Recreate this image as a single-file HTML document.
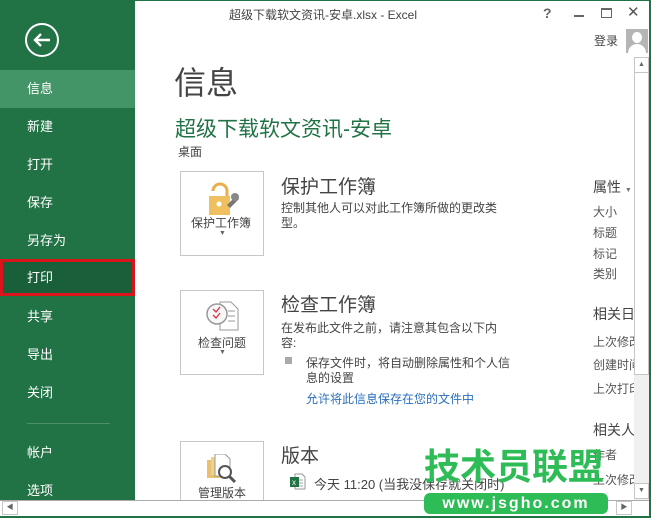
<!DOCTYPE html>
<html><head><meta charset="utf-8"><style>
*{margin:0;padding:0;box-sizing:border-box}
body{width:651px;height:518px;overflow:hidden;background:#fff;font-family:"Liberation Sans","Noto Sans CJK SC",sans-serif;position:relative;color:#444}
.a{position:absolute;white-space:nowrap}
#side{position:absolute;left:0;top:0;width:135px;height:500px;background:#217346}
.nav{position:absolute;left:0;width:135px;height:37px;color:#fff;font-size:13px;line-height:37px;padding-left:27px}
.box{position:absolute;left:180px;width:84px;border:1px solid #c6c6c6;background:#fff;font-size:12px;color:#444;text-align:center}
.h2{font-size:19px;color:#444}
.p{font-size:12px;color:#444}
.r{font-size:12px;color:#555}
#rc{position:absolute;left:590px;top:170px;width:44px;height:330px;overflow:hidden}
#rc .a{left:3px}
</style></head><body>
<div id="side">
<svg class="a" style="left:24px;top:22px" width="36" height="36"><circle cx="18" cy="18" r="16" fill="none" stroke="#fff" stroke-width="2"/><path d="M26 18H11M17 12l-6 6 6 6" fill="none" stroke="#fff" stroke-width="2.4"/></svg>
<div class="nav" style="top:70px;height:38px;background:#439467">信息</div>
<div class="nav" style="top:108px">新建</div>
<div class="nav" style="top:146px">打开</div>
<div class="nav" style="top:184px">保存</div>
<div class="nav" style="top:222px">另存为</div>
<div class="nav" style="top:259px;height:37px;background:#19603a;border:3px solid #d9141b;padding-left:24px;line-height:31px">打印</div>
<div class="nav" style="top:298px">共享</div>
<div class="nav" style="top:336px">导出</div>
<div class="nav" style="top:374px">关闭</div>
<div class="a" style="left:27px;top:423px;width:83px;height:1px;background:#4c9068"></div>
<div class="nav" style="top:434px">帐户</div>
<div class="nav" style="top:472px">选项</div>
</div>
<div class="a" style="left:229px;top:6px;font-size:12px;color:#444">超级下载软文资讯-安卓.xlsx - Excel</div>
<div class="a" style="left:543px;top:5px;font-size:14px;font-weight:bold;color:#666">?</div>
<div class="a" style="left:574px;top:15px;width:10px;height:2px;background:#666"></div>
<div class="a" style="left:601px;top:8px;width:11px;height:10px;border:1px solid #666;border-top-width:2px"></div>
<div class="a" style="left:627px;top:3px;font-size:15px;color:#555">✕</div>
<div class="a" style="left:594px;top:32px;font-size:12px;color:#444">登录</div>
<div class="a" style="left:626px;top:29px;width:22px;height:24px;background:#b5b5b5;overflow:hidden"><div style="position:absolute;left:6px;top:3px;width:10px;height:11px;border-radius:50%;background:#fff"></div><div style="position:absolute;left:2px;top:15px;width:18px;height:14px;border-radius:9px 9px 0 0;background:#fff"></div></div>
<div class="a" style="left:174px;top:58px;font-size:32px;color:#444">信息</div>
<div class="a" style="left:175px;top:113px;font-size:21px;color:#217346">超级下载软文资讯-安卓</div>
<div class="a" style="left:178px;top:143px;font-size:12px;color:#444">桌面</div>
<div class="box" style="top:171px;height:85px">
<svg class="a" style="left:27px;top:9px" width="32" height="36"><path d="M5 10a7 7 0 0 1 14 0v5" fill="none" stroke="#e8b04a" stroke-width="3"/><rect x="1" y="15" width="21" height="19" fill="#f0c060"/><circle cx="11" cy="23" r="2.5" fill="#fff"/><path d="M19 24l9-9 3 3-9 9z" fill="#777"/><circle cx="27" cy="16" r="4" fill="#888"/></svg>
<div class="a" style="left:10px;top:42px">保护工作簿</div><div class="a" style="left:38px;top:58px;font-size:7px;color:#666">▼</div></div>
<div class="a h2" style="left:281px;top:172px">保护工作簿</div>
<div class="a p" style="left:281px;top:199px">控制其他人可以对此工作簿所做的更改类</div>
<div class="a p" style="left:281px;top:214px">型。</div>
<div class="box" style="top:290px;height:85px">
<svg class="a" style="left:25px;top:10px" width="34" height="30"><path d="M14 1h11l7 7v21H14z" fill="#fff" stroke="#999"/><path d="M22 10h7M22 15h7M22 20h7" stroke="#999"/><circle cx="11" cy="13" r="10" fill="#f8f8f8" stroke="#999" stroke-width="1.5"/><path d="M7 8l3 3 4-5M7 14l3 3 4-5" fill="none" stroke="#d34" stroke-width="1.3"/></svg>
<div class="a" style="left:17px;top:43px">检查问题</div><div class="a" style="left:38px;top:58px;font-size:7px;color:#666">▼</div></div>
<div class="a h2" style="left:281px;top:290px">检查工作簿</div>
<div class="a p" style="left:281px;top:319px">在发布此文件之前，请注意其包含以下内</div>
<div class="a p" style="left:281px;top:334px">容:</div>
<div class="a" style="left:285px;top:357px;width:7px;height:7px;background:#aaa"></div>
<div class="a p" style="left:306px;top:354px">保存文件时，将自动删除属性和个人信</div>
<div class="a p" style="left:306px;top:369px">息的设置</div>
<div class="a p" style="left:306px;top:390px;color:#2a6ebb">允许将此信息保存在您的文件中</div>
<div class="box" style="top:441px;height:70px">
<svg class="a" style="left:26px;top:12px" width="32" height="30"><rect x="0" y="6" width="14" height="18" fill="#e8c070"/><rect x="4" y="3" width="14" height="18" fill="#f0d090"/><path d="M8 0h10l5 5v17H8z" fill="#fff" stroke="#999"/><circle cx="18" cy="18" r="6" fill="#fff" stroke="#555" stroke-width="2"/><path d="M22 22l6 6" stroke="#555" stroke-width="3"/></svg>
<div class="a" style="left:17px;top:42px">管理版本</div></div>
<div class="a h2" style="left:281px;top:441px">版本</div>
<svg class="a" style="left:290px;top:473px" width="16" height="17"><path d="M5 1h7l3 3v12H5z" fill="#fff" stroke="#999"/><path d="M8 7h5M8 10h5M8 13h5" stroke="#aaa"/><rect x="0" y="4" width="9" height="10" fill="#217346"/><text x="2" y="12" font-size="8" fill="#fff" font-family="Liberation Sans">x</text></svg>
<div class="a" style="left:314px;top:474px;font-size:13px;color:#444">今天 11:20 (当我没保存就关闭时)</div>
<div id="rc">
<div class="a" style="top:7px;font-size:14px;color:#444">属性 <span style="font-size:7px;color:#777">▼</span></div>
<div class="a r" style="top:33px">大小</div>
<div class="a r" style="top:54px">标题</div>
<div class="a r" style="top:75px">标记</div>
<div class="a r" style="top:95px">类别</div>
<div class="a" style="top:134px;font-size:14px;color:#444">相关日期</div>
<div class="a r" style="top:163px">上次修改时间</div>
<div class="a r" style="top:186px">创建时间</div>
<div class="a r" style="top:210px">上次打印时间</div>
<div class="a" style="top:250px;font-size:14px;color:#444">相关人员</div>
<div class="a r" style="top:276px">作者</div>
<div class="a r" style="top:301px">上次修改者</div>
</div>
<div class="a" style="left:634px;top:57px;width:15px;height:443px;background:#f0f0f0"></div>
<div class="a" style="left:634px;top:57px;width:15px;height:318px;background:#fff;border:1px solid #c6c6c6"></div>
<div class="a" style="left:634px;top:57px;width:15px;height:16px;background:#fff;border:1px solid #c6c6c6;font-size:7px;text-align:center;line-height:14px;color:#666">▲</div>
<div class="a" style="left:634px;top:483px;width:15px;height:16px;background:#fff;border:1px solid #c6c6c6;font-size:7px;text-align:center;line-height:14px;color:#666">▼</div>
<div class="a" style="left:0;top:500px;width:651px;height:16px;background:#fff;border-top:1px solid #ababab"></div>
<div class="a" style="left:2px;top:501px;width:16px;height:14px;border:1px solid #c6c6c6;font-size:7px;text-align:center;line-height:12px;color:#666">◀</div>
<div class="a" style="left:616px;top:501px;width:16px;height:14px;border:1px solid #c6c6c6;font-size:7px;text-align:center;line-height:12px;color:#666">▶</div>
<div class="a" style="left:424px;top:443px;font-size:36px;font-weight:bold;color:#2dbc55;line-height:48px">技术员联盟</div>
<div class="a" style="left:424px;top:493px;width:184px;height:21px;background:#2dbc55;border-radius:6px;color:#fff;font-size:16px;font-weight:bold;text-align:center;line-height:21px;letter-spacing:2px">www.jsgho.com</div>
<div class="a" style="left:0;top:516px;width:651px;height:2px;background:#217346"></div>
<div class="a" style="left:649px;top:0;width:2px;height:518px;background:#217346"></div>
<div class="a" style="left:135px;top:0;width:516px;height:1px;background:#217346"></div>
</body></html>
